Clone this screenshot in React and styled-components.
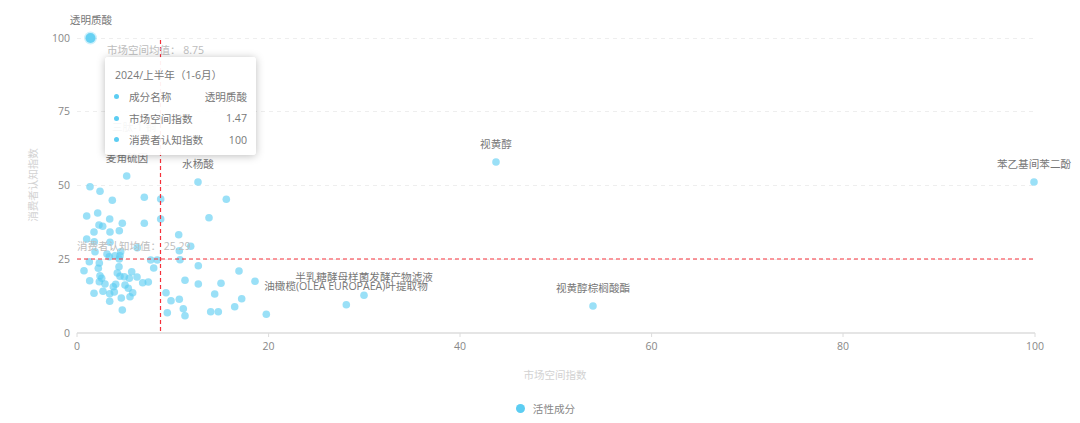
import styled, { createGlobalStyle } from 'styled-components'

const GlobalStyle = createGlobalStyle`
  html, body {
    margin: 0;
    padding: 0;
    background: #fff;
    font-family: "Open Sans", "Noto Sans CJK SC", sans-serif;
  }
`

const Page = styled.div`
  width: 1080px;
  height: 423px;
  overflow: hidden;
`

const ChartArea = styled.div`
  position: relative;
  height: 395px;
`

const Plot = styled.svg`
  display: block;
  width: 1080px;
  height: 395px;
`

const GridLine = styled.line`
  stroke: #eeeeee;
  stroke-width: 1;
  stroke-dasharray: 4 4;
`

const AxisLine = styled.line`
  stroke: #dcdcdc;
  stroke-width: ${(p) => p.$w || 1};
`

const MeanLine = styled.line`
  stroke: #f5303a;
  stroke-width: 1.2;
  stroke-dasharray: 4 3;
`

const Dot = styled.circle`
  fill: #5ccdf2;
  fill-opacity: ${(p) => p.$opacity || 0.62};
`

const Tick = styled.text`
  font-size: 10.5px;
  fill: #888;
  dominant-baseline: central;
  text-anchor: ${(p) => p.$anchor || 'middle'};
`

const AxisName = styled.text`
  font-size: 10.5px;
  fill: #d2d2d2;
  text-anchor: middle;
  dominant-baseline: central;
`

const MeanLabel = styled.text`
  font-size: 10.5px;
  fill: #bdbdbd;
  dominant-baseline: central;
`

const PointLabel = styled.text`
  font-size: 10.6px;
  fill: #777;
  text-anchor: middle;
  dominant-baseline: central;
`

const Tooltip = styled.div`
  position: absolute;
  left: 105px;
  top: 57px;
  width: 151px;
  height: 98px;
  box-sizing: border-box;
  padding: 9px 9px 0 9px;
  background: rgba(255, 255, 255, 0.93);
  border-radius: 3px;
  box-shadow: 0 1px 8px rgba(0, 0, 0, 0.26);
  color: #777;
  font-size: 10.6px;
`

const TooltipTitle = styled.div`
  height: 18px;
  line-height: 18px;
  margin: 0 0 2px 1px;
`

const TooltipRow = styled.div`
  display: flex;
  align-items: center;
  height: 21.5px;
`

const Marker = styled.span`
  width: 5px;
  height: 5px;
  margin: 0 10px 0 0;
  border-radius: 50%;
  background: #5ccdf2;
`

const RowValue = styled.span`
  margin-left: auto;
`

const Legend = styled.div`
  display: flex;
  align-items: center;
  justify-content: center;
  height: 26px;
  padding-left: 11px;
  gap: 8px;
  color: #888;
  font-size: 10.6px;
`

const LegendDot = styled.span`
  width: 9px;
  height: 9px;
  border-radius: 50%;
  background: #5ccdf2;
`

const points = [
  [126.7, 176], [90, 186.7], [100, 191.3], [112.3, 200.3], [144.3, 197.3], [160.7, 199],
  [97.7, 213], [86.7, 216], [109.7, 219], [160.7, 219], [99, 225], [102.7, 226.3],
  [122.3, 223.3], [144.3, 223.3], [94, 232], [110, 232], [119.3, 230.7],
  [86.7, 239], [94.3, 241.7], [110, 242.3], [137.3, 247.7], [95, 251.7], [107, 254],
  [109.3, 256.7], [115, 255.7], [120.7, 251.7], [120, 255.7], [119.3, 259], [150.7, 260],
  [157.3, 260], [89.3, 261.7], [99.3, 263], [119, 266.7], [98.3, 268.3], [153.7, 268],
  [84, 270.7], [117.3, 273], [131.7, 271.7], [100, 275.7], [120, 276.3], [124.3, 276.7],
  [129.3, 278.3], [137, 277], [89.7, 280.7], [101.7, 278.3], [99.3, 281.7], [105, 284],
  [125, 285], [142.7, 282.7], [148.3, 282], [115.7, 284.3], [113.3, 286.7], [128.3, 288.3],
  [103, 291.3], [94, 293.3], [109.7, 293.7], [114.3, 292], [132.7, 292.7], [121.3, 298],
  [130, 296.7], [109.7, 301.3], [122.3, 310], [166, 292.7], [171, 300.7], [167.3, 312.7],
  [198, 182], [226.3, 199.3], [209, 217.7], [178.7, 234.7], [190.7, 246.3],
  [179.3, 250.7], [180, 259.7], [198.3, 265.7], [239, 271], [185, 280.3], [198.3, 284],
  [221, 283.3], [255, 281.3], [214.7, 294], [179.3, 299.3], [241.7, 298.7], [234.7, 306.7],
  [183.3, 308.7], [210.7, 311.7], [218.3, 311.7], [185, 315.7], [266.3, 314.3], [346.3, 304.7],
  [364, 295.3], [496, 162], [1034, 182], [593, 306], [134, 144],
]

const labels = [
  { x: 91, y: 20, text: '透明质酸' },
  { x: 134, y: 127, text: '三肽-1 铜' },
  { x: 127, y: 158, text: '麦角硫因' },
  { x: 198, y: 164, text: '水杨酸' },
  { x: 496, y: 144, text: '视黄醇' },
  { x: 1034, y: 164, text: '苯乙基间苯二酚' },
  { x: 364, y: 277, text: '半乳糖酵母样菌发酵产物滤液' },
  { x: 346, y: 286, text: '油橄榄(OLEA EUROPAEA)叶提取物' },
  { x: 593, y: 288, text: '视黄醇棕榈酸酯' },
]

const yTicks = [
  { y: 333, text: '0' },
  { y: 259, text: '25' },
  { y: 185, text: '50' },
  { y: 111, text: '75' },
  { y: 38, text: '100' },
]

const xTicks = [
  { x: 77, text: '0' },
  { x: 268.6, text: '20' },
  { x: 460, text: '40' },
  { x: 651.6, text: '60' },
  { x: 843, text: '80' },
  { x: 1035, text: '100' },
]

const tooltipRows = [
  ['成分名称', '透明质酸'],
  ['市场空间指数', '1.47'],
  ['消费者认知指数', '100'],
]

export default function App() {
  return (
    <Page>
      <GlobalStyle />
      <ChartArea>
        <Plot viewBox="0 0 1080 395">
          {yTicks.slice(1).map((t) => (
            <GridLine key={t.y} x1="77" x2="1035" y1={t.y + 0.5} y2={t.y + 0.5} />
          ))}
          {yTicks.map((t) => (
            <Tick key={t.y} x="70" y={t.y} $anchor="end">{t.text}</Tick>
          ))}
          <AxisLine x1="77" x2="1035" y1="333" y2="333" $w={1.5} />
          {xTicks.map((t) => (
            <g key={t.x}>
              <AxisLine x1={t.x} x2={t.x} y1="333" y2="337" />
              <Tick x={t.x} y="346">{t.text}</Tick>
            </g>
          ))}
          <AxisName x="555" y="375">市场空间指数</AxisName>
          <AxisName x="33" y="185" transform="rotate(-90 33 185)">消费者认知指数</AxisName>

          {points.map(([x, y]) => (
            <Dot key={`${x}-${y}`} cx={x} cy={y} r="3.8" />
          ))}
          <Dot cx="90.5" cy="38" r="6.5" $opacity={0.3} />
          <Dot cx="90.5" cy="38" r="5" $opacity={0.9} />

          <MeanLine x1="77" x2="1035" y1="259" y2="259" />
          <MeanLine x1="160.5" x2="160.5" y1="40" y2="333" />
          <MeanLabel x="107" y="50">市场空间均值： 8.75</MeanLabel>
          <MeanLabel x="77" y="246">消费者认知均值： 25.29</MeanLabel>

          {labels.map((l) => (
            <PointLabel key={l.text} x={l.x} y={l.y}>{l.text}</PointLabel>
          ))}
        </Plot>
        <Tooltip>
          <TooltipTitle>2024/上半年（1-6月）</TooltipTitle>
          {tooltipRows.map(([name, value]) => (
            <TooltipRow key={name}>
              <Marker />
              <span>{name}</span>
              <RowValue>{value}</RowValue>
            </TooltipRow>
          ))}
        </Tooltip>
      </ChartArea>
      <Legend>
        <LegendDot />
        <span>活性成分</span>
      </Legend>
    </Page>
  )
}
